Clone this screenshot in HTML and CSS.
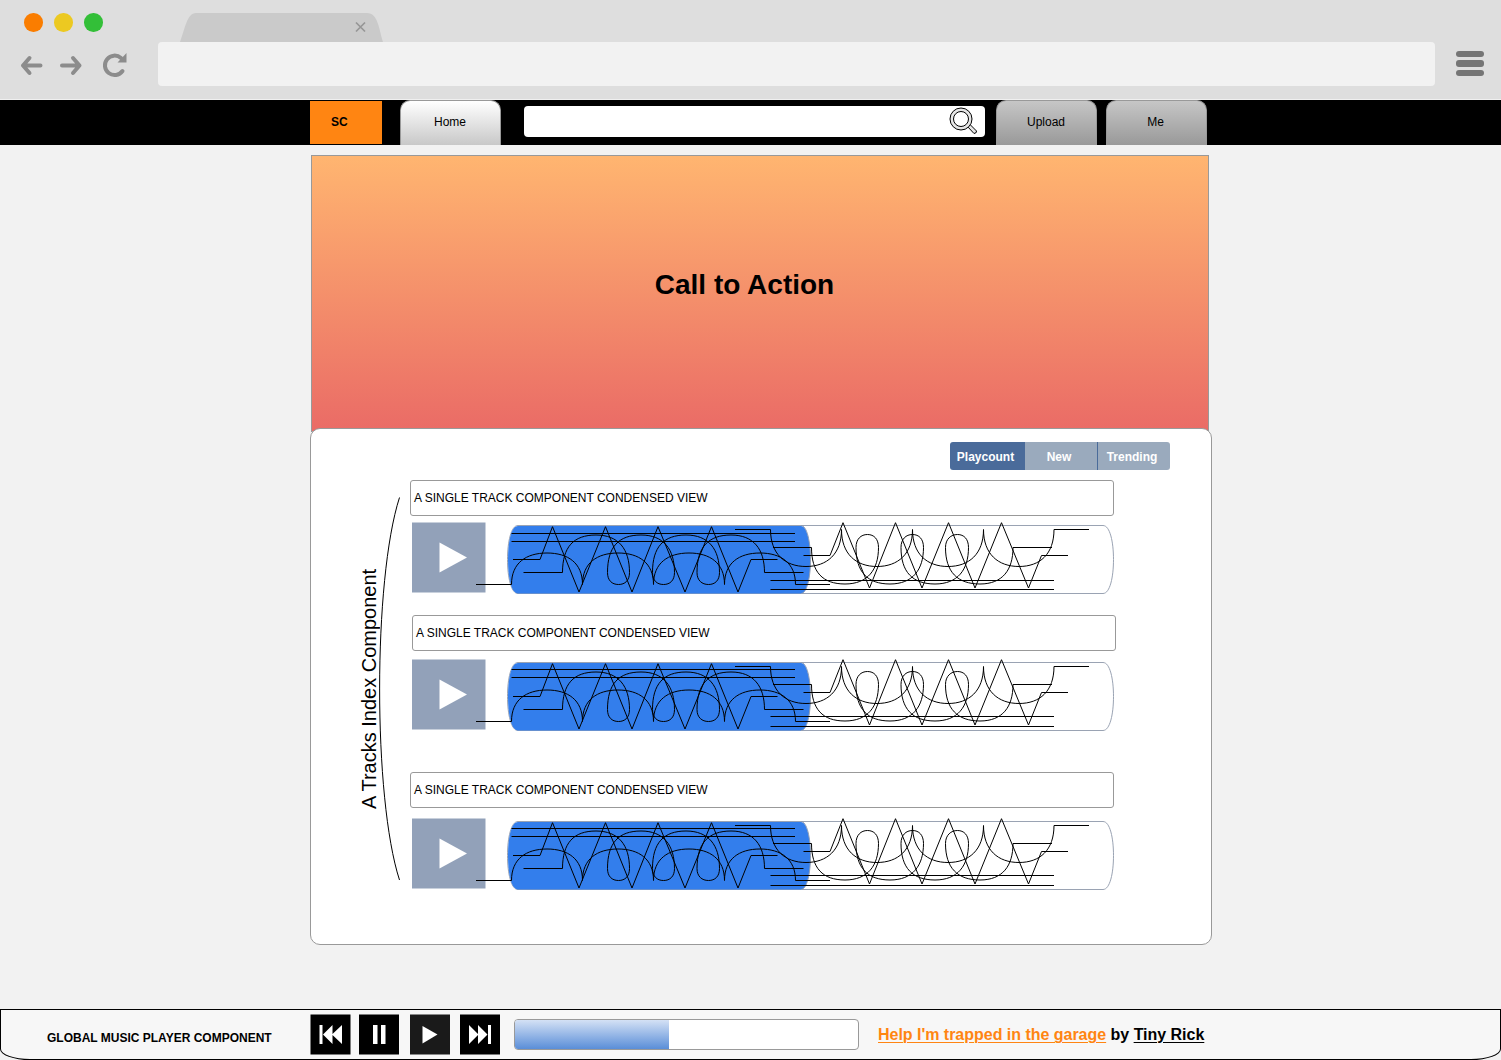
FILE: index.html
```html
<!DOCTYPE html>
<html lang="en">
<head>
<meta charset="utf-8">
<title>SC</title>
<link rel="stylesheet" href="styles.css">
</head>
<body>
<svg class="defs" aria-hidden="true">
  <symbol id="play" viewBox="0 0 74 71">
    <rect x="0" y="0.5" width="73.5" height="70" fill="#92a1b9"/>
    <path d="M27.5 20.5L55 35.5L27.5 50.5Z" fill="#fff"/>
  </symbol>
  <g id="pill">
    <path d="M518 525.5H1103C1110 525.5 1113.5 542 1113.5 559.5S1110 593.5 1103 593.5H518C511 593.5 507.5 577 507.5 559.5S511 525.5 518 525.5Z" fill="#fff" stroke="#9aa3b3"/>
    <path d="M518 526H801C807 526 810.5 542 810.5 559.5S807 593.5 801 593.5H518C511 593.5 508 577 508 559.5S511 526 518 526Z" fill="#337eec"/>
    <path d="M801 525.5C807 525.5 810.5 542 810.5 559.5S807 593.5 801 593.5" fill="none" stroke="#8f9db5"/>
  </g>
  <g id="rules" fill="none" stroke="#000">
    <path d="M511.5 533.5H795M511.5 541.5H795M770.5 580.5H1054"/>
  </g>
  <g id="curves" fill="none" stroke="#000">
    <path d="M513 559.5H540L552.5 526.7L579 592L605.5 526.7L632 592L658 526.7L685 592L711.5 526.7L738 592L751 559.5H777.5"/>
    <path d="M803.5 555.5H830L843 522.7L869.5 588L895.5 522.7L922 588L948.5 522.7L975 588L1001.5 522.7L1028.5 588L1041.5 555.5H1068"/>
    <path d="M770.5 589.5H1054"/>
    <path d="M476 584.5H511.5C511.5 563 526 553 547 553S582.5 563 582.5 584.5C582.5 563 597 553 618 553S653.5 563 653.5 584.5C653.5 563 668 553 689 553S724.5 563 724.5 584.5C724.5 563 739 553 760 553S795.5 563 795.5 584.5H830"/>
    <path d="M523.5 572.5H562.5C562.5 547 573.5 535 596 535S629.5 549 629.5 572.5C629.5 580.5 625 584.5 618.5 584.5S607.5 580.5 607.5 572.5C607.5 547 618.5 535 641 535S674.5 549 674.5 572.5C674.5 580.5 670 584.5 663.5 584.5S652.5 580.5 652.5 572.5C652.5 547 663.5 535 686 535S719.5 549 719.5 572.5C719.5 580.5 715 584.5 708.5 584.5S697 580.5 697 572.5C697 547 708.5 535 731 535S764.5 549 764.5 572.5H803.5"/>
    <path d="M735 529.5H770.5C770.5 554 785 566.5 806 566.5S841.5 554 841.5 529.5C841.5 554 856 566.5 877 566.5S912.5 554 912.5 529.5C912.5 554 927 566.5 948 566.5S983.5 554 983.5 529.5C983.5 554 998 566.5 1019 566.5S1054 554 1054 529.5H1089"/>
    <path d="M773 547.5H811.5C811.5 572 822.5 584 845 584S878.5 570 878.5 547.5C878.5 539 874 534.5 867.5 534.5S856 539 856 547.5C856 572 867.5 584 890 584S923.5 570 923.5 547.5C923.5 539 919 534.5 912.5 534.5S901 539 901 547.5C901 572 912.5 584 935 584S968.5 570 968.5 547.5C968.5 539 964 534.5 957.5 534.5S945.5 539 945.5 547.5C945.5 572 957.5 584 980 584S1013 570 1013 547.5H1052"/>
  </g>
</svg>

<header class="chrome">
  <div class="chrome-left">
    <div class="lights"><span class="light red"></span><span class="light yellow"></span><span class="light green"></span></div>
    <svg class="arrows" width="112" height="30" viewBox="18 50 112 30" fill="none" stroke="#8c8c8c" stroke-width="4" stroke-linecap="round" stroke-linejoin="round">
      <path d="M40.5 65.5H23M29.5 58L23 65.5L29.5 73"/>
      <path d="M62 65.5H79.5M73 58L79.5 65.5L73 73"/>
      <path d="M122.5 71A9.7 9.7 0 1 1 121 58"/>
      <path d="M126.5 53V62.5H117.5Z" fill="#8c8c8c" stroke="none"/>
    </svg>
  </div>
  <div class="chrome-mid">
    <svg class="tab" width="204" height="29" viewBox="0 0 204 29"><path d="M0 29C5 16 7 0 16 0H187C198 0 199 16 203 29Z" fill="#cacaca"/><path d="M176 9.5L185 18.5M185 9.5L176 18.5" stroke="#969696" stroke-width="1.7"/></svg>
    <div class="address"></div>
  </div>
  <div class="burger"><span></span><span></span><span></span></div>
</header>

<nav class="nav">
  <a class="logo">SC</a>
  <a class="nav-tab home">Home</a>
  <div class="search">
    <svg width="30" height="30" viewBox="0 0 30 30" fill="none" stroke="#000" stroke-width="1">
      <path d="M19.5 20.5L26 27.5Q29 27 28.5 25L22 18.5Z" fill="#e6e6e6"/>
      <circle cx="13" cy="13" r="11" fill="#e6e6e6"/><circle cx="13" cy="13" r="7.5" fill="#fff"/>
    </svg>
  </div>
  <a class="nav-tab upload">Upload</a>
  <a class="nav-tab me">Me</a>
</nav>

<main class="content">
  <section class="hero"><h1>Call to Action</h1></section>
  <section class="card">
    <div class="filters"><span class="on">Playcount</span><span>New</span><span class="last">Trending</span></div>
    <div class="index">
      <div class="index-label"><span>A Tracks Index Component</span></div>
      <svg class="bracket" width="22" height="384" viewBox="379 497 22 384" fill="none" stroke="#000"><path d="M399.5 497.5C373 580 373 798 399.5 880"/></svg>
      <div class="tracks">
        <article class="track first">
          <h2>A SINGLE TRACK COMPONENT CONDENSED VIEW</h2>
          <div class="player"><svg class="play"><use href="#play"/></svg><svg class="wave" viewBox="507 522 608 72"><use href="#pill"/><use href="#rules"/><use href="#curves"/></svg></div>
        </article>
        <article class="track second">
          <h2>A SINGLE TRACK COMPONENT CONDENSED VIEW</h2>
          <div class="player"><svg class="play"><use href="#play"/></svg><svg class="wave" viewBox="507 522 608 72"><use href="#pill"/><use href="#rules" y="-1"/><use href="#curves"/></svg></div>
        </article>
        <article class="track third">
          <h2>A SINGLE TRACK COMPONENT CONDENSED VIEW</h2>
          <div class="player"><svg class="play"><use href="#play"/></svg><svg class="wave" viewBox="507 522 608 72"><use href="#pill"/><use href="#rules" y="-1"/><use href="#curves"/></svg></div>
        </article>
      </div>
    </div>
  </section>
</main>

<footer class="global">
  <strong class="global-label">GLOBAL MUSIC PLAYER COMPONENT</strong>
  <div class="controls">
    <svg class="prev" width="41" height="41" viewBox="0 0 41 41"><rect x="0.5" y="0.5" width="40" height="40"/><path d="M9.5 11h3v19h-3zM13 20.5L22.500 11V20L32 11V30L22.5 21V30Z" fill="#fff"/></svg>
    <svg class="pause" width="40" height="41" viewBox="0 0 40 41"><rect y="0.5" width="40" height="40"/><path d="M14 11h4.5v19H14zM22 11h4.5v19H22z" fill="#fff"/></svg>
    <svg class="resume" width="40" height="41" viewBox="0 0 40 41"><rect y="0.5" width="40" height="40" fill="#1a1a1a"/><path d="M12.5 12L27.5 20.5L12.5 29.5Z" fill="#fff"/></svg>
    <svg width="40" height="41" viewBox="0 0 40 41"><rect y="0.5" width="40" height="40"/><path d="M28 11h3v19h-3zM27.5 20.5L18 11V20L9 11V30L18 21V30Z" fill="#fff"/></svg>
  </div>
  <div class="progress"><div class="bar"></div></div>
  <p class="now"><a class="song">Help I'm trapped in the garage</a> by <a>Tiny Rick</a></p>
</footer>
</body>
</html>
```
FILE: styles.css
```css
* { box-sizing: border-box; }
body {
  margin: 0;
  width: 1501px;
  height: 1060px;
  overflow: hidden;
  display: flex;
  flex-direction: column;
  background: #f2f2f2;
  color: #000;
  font-family: "Liberation Sans", Arial, sans-serif;
  font-size: 12px;
}
h1, h2, p { margin: 0; }
svg { display: block; flex: none; }
.defs { position: absolute; width: 0; height: 0; }

.chrome {
  display: flex;
  height: 100px;
  flex: none;
  background: #dedede;
  border-bottom: 1px solid #f0f0f0;
}
.chrome-left { width: 158px; padding: 13px 0 0 18px; }
.lights { display: flex; gap: 11.5px; padding-left: 6px; height: 37px; }
.light { width: 18.5px; height: 18.5px; border-radius: 50%; }
.red { background: #fa7d00; }
.yellow { background: #ecc921; }
.green { background: #33bf38; }
.chrome-mid { width: 1277px; padding-top: 13px; }
.tab { margin-left: 22px; }
.address { height: 44px; background: #f2f2f2; border-radius: 4px; }
.burger {
  display: flex;
  flex-direction: column;
  gap: 3.5px;
  padding: 50.5px 0 0 21px;
}
.burger span { width: 28px; height: 6.3px; border-radius: 3px; background: #757575; }

.nav { display: flex; flex: none; height: 45px; padding-left: 310px; background: #000; }
.logo {
  width: 72px;
  height: 43px;
  margin-top: 1px;
  padding-left: 21px;
  background: #ff8512;
  font-weight: bold;
  line-height: 43px;
}
.nav-tab {
  width: 101px;
  height: 45px;
  padding-right: 1px;
  border: 1px solid #999;
  border-bottom: 0;
  border-radius: 10px 10px 0 0;
  text-align: center;
  line-height: 43px;
  background: linear-gradient(#c6c6c6, #999);
}
.home { margin-left: 18px; background: linear-gradient(#fff, #c8c8c8); }
.search {
  display: flex;
  justify-content: flex-end;
  width: 461px;
  height: 31px;
  margin: 6px 11px 0 23px;
  padding-right: 7px;
  border-radius: 4px;
  background: #fff;
}
.me { margin-left: 9px; padding-right: 2px; }

.content { flex: 1; padding: 10px 0 0 310px; }
.hero {
  width: 898px;
  height: 277px;
  margin-left: 1px;
  padding-right: 31px;
  border: 1px solid #999;
  background: linear-gradient(#ffb570, #ea6b66);
  text-align: center;
}
.hero h1 { font-size: 28px; line-height: 32px; padding-top: 113px; }
.card {
  position: relative;
  width: 902px;
  height: 517px;
  margin-top: -4px;
  border: 1px solid #999;
  border-radius: 10px;
  background: #fff;
}
.filters {
  display: flex;
  width: 220px;
  height: 28px;
  margin: 13px 0 0 639px;
  border-radius: 3px;
  overflow: hidden;
  color: #fff;
  font-weight: bold;
  line-height: 30px;
  text-align: center;
}
.filters span { flex: 1; padding-right: 4px; background: #9aaabd; }
.filters .on { flex: none; width: 75px; background: #4a6b9a; }
.filters .last { border-left: 1px solid #4a6b9a; }

.index { display: flex; }
.index-label {
  display: flex;
  width: 20px;
  height: 240px;
  margin: 99px 1px 0 48px;
}
.index-label span {
  writing-mode: vertical-rl;
  transform: rotate(180deg);
  font-size: 20px;
  line-height: 20px;
  white-space: nowrap;
}
.bracket { margin-top: 27px; margin-left: -1px; }
.tracks { padding: 10px 0 0 9px; }
.track h2 {
  width: 704px;
  height: 36px;
  padding-left: 3px;
  border: 1px solid #999;
  border-radius: 3px;
  font-size: 12px;
  font-weight: normal;
  line-height: 34px;
}
.player { display: flex; padding-left: 2px; }
.play { width: 74px; height: 71px; }
.wave { width: 608px; height: 72px; margin-left: 21px; overflow: visible; }
.first .player { margin-top: 6px; }
.second { margin-top: 21px; }
.second h2 { margin-left: 2px; }
.second .player { margin-top: 8px; }
.third { margin-top: 41px; }
.third .player { margin-top: 10px; }

.global {
  display: flex;
  flex: none;
  height: 51px;
  border: 1px solid #000;
  border-radius: 0 0 30px 30px / 0 0 11px 11px;
  background: #f7f7f7;
}
.global-label { width: 263px; margin-left: 46px; font-size: 12px; line-height: 57px; white-space: nowrap; }
.controls { display: flex; margin-top: 4px; }
.prev { margin-right: 8px; }
.pause { margin-right: 11px; }
.resume { margin-right: 10px; }
.progress {
  width: 345px;
  height: 31px;
  margin: 9px 0 0 14px;
  border: 1px solid #999;
  border-radius: 4px;
  overflow: hidden;
  background: #fff;
}
.bar { width: 154px; height: 100%; background: linear-gradient(#d4e1f5, #5a8ed8); }
.now { margin-left: 19px; font-size: 16px; font-weight: bold; line-height: 49px; letter-spacing: -0.02px; white-space: nowrap; }
.now a { text-decoration: underline; text-decoration-thickness: 1px; text-underline-offset: 2px; }
.now .song { color: #ff8512; }
```
